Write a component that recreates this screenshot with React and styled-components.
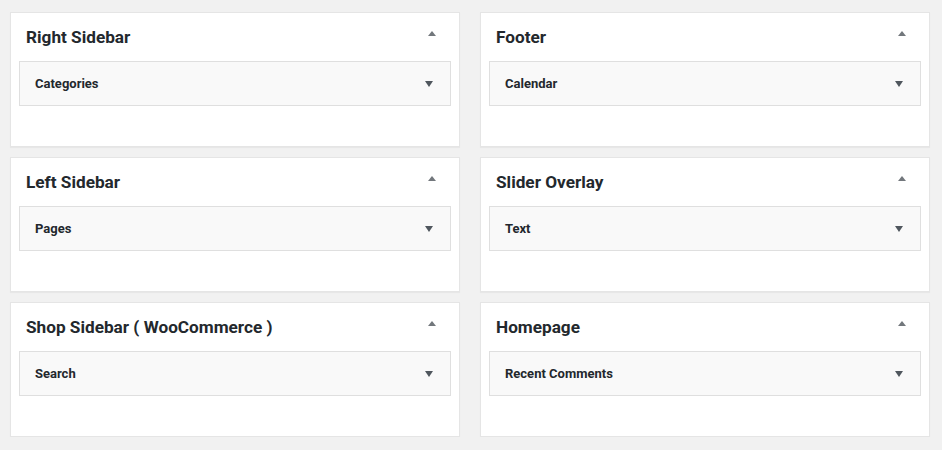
import styled, { createGlobalStyle } from "styled-components";

const GlobalStyle = createGlobalStyle`
    html, body {
        margin: 0;
        background: #f1f1f1;
        font-family: Roboto, "Liberation Sans", sans-serif;
        color: #23282d;
    }
`;

const Page = styled.div`
    display: grid;
    grid-template-columns: 450px 450px;
    column-gap: 20px;
    row-gap: 10px;
    padding: 12px 0 0 10px;
`;

const Card = styled.div`
    box-sizing: border-box;
    height: 135px;
    background: #fff;
    border: 1px solid #e5e5e5;
    box-shadow: 0 1px 1px rgba(0, 0, 0, 0.04);
    padding: 0 8px 40px;
`;

const CardHead = styled.div`
    display: flex;
    align-items: center;
    justify-content: space-between;
    height: 48px;
    padding: 0 15px 0 7px;
`;

const Title = styled.h2`
    margin: 2px 0 0;
    font-size: 17.2px;
    font-weight: 700;
    line-height: 1;
`;

const Arrow = styled.span`
    width: 0;
    height: 0;
    border-left: 4px solid transparent;
    border-right: 4px solid transparent;
    ${(p) =>
        p.$up
            ? "border-bottom: 5px solid #72777c; margin-top: -8px;"
            : "border-top: 6px solid #50575e; margin-top: 1px;"}
`;

const Widget = styled.div`
    box-sizing: border-box;
    display: flex;
    align-items: center;
    justify-content: space-between;
    height: 45px;
    background: #f9f9f9;
    border: 1px solid #dfdfdf;
    padding: 0 17px 0 15px;
    font-size: 13px;
    font-weight: 700;
`;

const areas = [
    ["Right Sidebar", "Categories"],
    ["Footer", "Calendar"],
    ["Left Sidebar", "Pages"],
    ["Slider Overlay", "Text"],
    ["Shop Sidebar ( WooCommerce )", "Search"],
    ["Homepage", "Recent Comments"],
];

export default function App() {
    return (
        <>
            <GlobalStyle />
            <Page>
                {areas.map(([title, widget]) => (
                    <Card key={title}>
                        <CardHead>
                            <Title>{title}</Title>
                            <Arrow $up />
                        </CardHead>
                        <Widget>
                            <span>{widget}</span>
                            <Arrow />
                        </Widget>
                    </Card>
                ))}
            </Page>
        </>
    );
}
